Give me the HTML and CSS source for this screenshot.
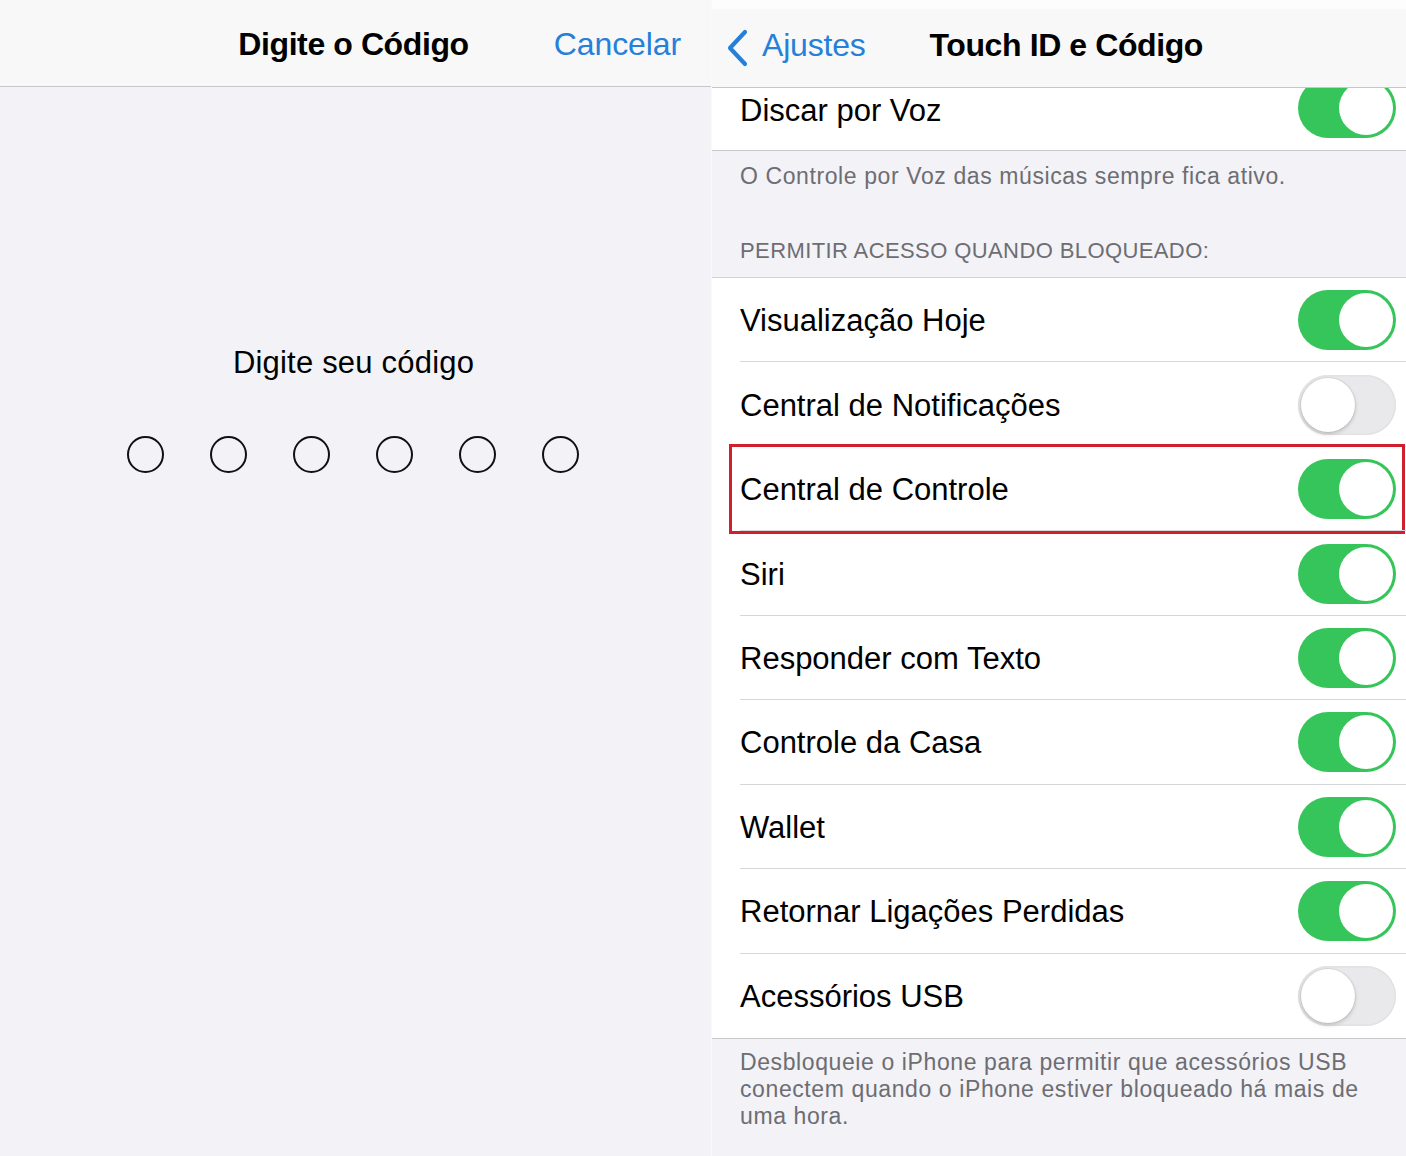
FILE: index.html
```html
<!DOCTYPE html>
<html lang="pt-BR">
<head>
<meta charset="utf-8">
<title>Touch ID e Código</title>
<link rel="stylesheet" href="styles.css">
</head>
<body>
<div class="screens">
  <section class="passcode">
    <header class="nav nav-left">
      <h1 class="nav-title">Digite o Código</h1>
      <span class="nav-action">Cancelar</span>
    </header>
    <div class="passcode-body">
      <p class="prompt">Digite seu código</p>
      <div class="dots">
        <span class="dot"></span><span class="dot"></span><span class="dot"></span>
        <span class="dot"></span><span class="dot"></span><span class="dot"></span>
      </div>
    </div>
  </section>

  <section class="settings">
    <div class="status-strip"></div>
    <header class="nav nav-right">
      <span class="back">
        <svg class="chev" width="24" height="38" viewBox="0 0 24 38"><path d="M19 3 L4 19 L19 35" fill="none" stroke="#2680d9" stroke-width="4.2" stroke-linecap="round" stroke-linejoin="round"/></svg>
        <span class="back-label">Ajustes</span>
      </span>
      <h1 class="nav-title right-title">Touch ID e Código</h1>
    </header>

    <div class="group first">
      <div class="row clipped">
        <span class="label">Discar por Voz</span>
        <span class="toggle on"><span class="knob"></span></span>
      </div>
    </div>
    <p class="footnote one">O Controle por Voz das músicas sempre fica ativo.</p>
    <p class="section-header">PERMITIR ACESSO QUANDO BLOQUEADO:</p>

    <div class="group">
      <div class="row"><span class="label">Visualização Hoje</span><span class="toggle on"><span class="knob"></span></span></div>
      <div class="row"><span class="label">Central de Notificações</span><span class="toggle off"><span class="knob"></span></span></div>
      <div class="row highlighted"><span class="label">Central de Controle</span><span class="toggle on"><span class="knob"></span></span><span class="highlight-box"></span></div>
      <div class="row"><span class="label">Siri</span><span class="toggle on"><span class="knob"></span></span></div>
      <div class="row"><span class="label">Responder com Texto</span><span class="toggle on"><span class="knob"></span></span></div>
      <div class="row"><span class="label">Controle da Casa</span><span class="toggle on"><span class="knob"></span></span></div>
      <div class="row"><span class="label">Wallet</span><span class="toggle on"><span class="knob"></span></span></div>
      <div class="row"><span class="label">Retornar Ligações Perdidas</span><span class="toggle on"><span class="knob"></span></span></div>
      <div class="row last"><span class="label">Acessórios USB</span><span class="toggle off"><span class="knob"></span></span></div>
    </div>
    <p class="footnote two">Desbloqueie o iPhone para permitir que acessórios USB conectem quando o iPhone estiver bloqueado há mais de uma hora.</p>
  </section>
</div>
</body>
</html>
```

FILE: styles.css
```css
* { box-sizing: border-box; }
html, body { margin: 0; padding: 0; }
body {
  width: 1406px;
  height: 1156px;
  overflow: hidden;
  background: #f2f2f7;
  font-family: "Liberation Sans", Arial, sans-serif;
  color: #000;
}
.screens {
  display: flex;
  height: 1156px;
}

/* ---------- left screen ---------- */
.passcode {
  width: 711px;
  flex: none;
  background: #f2f2f7;
}
.nav {
  display: flex;
  align-items: center;
  background: #f8f8f8;
  border-bottom: 1px solid #c6c6c8;
}
.nav-left {
  height: 87px;
  position: relative;
  justify-content: center;
  padding-top: 2px;
}
.nav-title {
  margin: 0;
  font-size: 32px;
  font-weight: 700;
  letter-spacing: -0.4px;
}
.nav-left .nav-title { margin-right: 4px; }
.nav-action {
  position: absolute;
  right: 30px;
  top: 26px;
  font-size: 32px;
  color: #2680d9;
  letter-spacing: -0.1px;
}
.passcode-body {
  display: flex;
  flex-direction: column;
  align-items: center;
  padding-top: 258px;
}
.prompt {
  margin: 0 4px 0 0;
  font-size: 31px;
  line-height: 36px;
  letter-spacing: 0.2px;
}
.dots {
  display: flex;
  gap: 46px;
  margin-top: 55px;
  margin-left: -5px;
}
.dot {
  width: 37px;
  height: 37px;
  border: 2px solid #111;
  border-radius: 50%;
}

/* ---------- right screen ---------- */
.settings {
  flex: 1;
  background: #f2f2f7;
  border-left: 1px solid #fafafa;
}
.status-strip {
  height: 9px;
  background: #fdfdfd;
}
.nav-right {
  height: 79px;
  padding-left: 14px;
  padding-bottom: 6px;
}
.back {
  display: flex;
  align-items: center;
  color: #2680d9;
}
.chev { margin-top: 5px; }
.back-label {
  font-size: 32px;
  margin-left: 12px;
  letter-spacing: -0.2px;
}
.right-title {
  margin-left: 64px;
}

.group {
  background: #fff;
  border-top: 1px solid #d1d1d6;
  border-bottom: 1px solid #c8c8cc;
}
.group.first { border-top: none; }
.row {
  position: relative;
  display: flex;
  align-items: center;
  justify-content: space-between;
  height: 84.45px;
  padding: 0 10px 0 28px;
}
.row::after {
  content: "";
  position: absolute;
  left: 28px;
  right: 0;
  bottom: 0;
  height: 1px;
  background: #d6d6da;
}
.row.last::after, .row.clipped::after { display: none; }
.row.clipped {
  height: 62px;
  overflow: hidden;
  align-items: flex-end;
}
.row.clipped .label {
  align-self: center;
  padding-top: 0;
  padding-bottom: 17px;
}
.row.clipped .toggle { margin-bottom: 12px; }
.label {
  font-size: 31px;
  letter-spacing: 0;
  padding-top: 2px;
}

.toggle {
  position: relative;
  width: 98px;
  height: 60px;
  border-radius: 30px;
  flex: none;
}
.toggle.on { background: #36c55a; }
.toggle.off {
  background: #e9e9eb;
  box-shadow: inset 0 0 0 1.5px #e2e2e4;
}
.knob {
  position: absolute;
  top: 3px;
  width: 54px;
  height: 54px;
  border-radius: 50%;
  background: #fff;
}
.toggle.on .knob { right: 3px; }
.toggle.off .knob {
  left: 3px;
  box-shadow: 0 2px 4px rgba(0,0,0,0.18), 0 0 0 1px rgba(0,0,0,0.06);
}

.highlight-box {
  position: absolute;
  left: 17px;
  right: 1px;
  top: -3px;
  bottom: -3px;
  border: 3px solid #d0202e;
  pointer-events: none;
}

.footnote {
  margin: 0;
  color: #6d6d72;
  font-size: 23px;
  line-height: 27px;
  padding: 0 36px 0 28px;
  letter-spacing: 0.6px;
}
.footnote.one { padding-top: 12px; }
.footnote.two { padding-top: 10px; }
.section-header {
  margin: 47px 0 13px;
  padding-left: 28px;
  color: #6d6d72;
  font-size: 22px;
  line-height: 27px;
  letter-spacing: 0.4px;
}
```
